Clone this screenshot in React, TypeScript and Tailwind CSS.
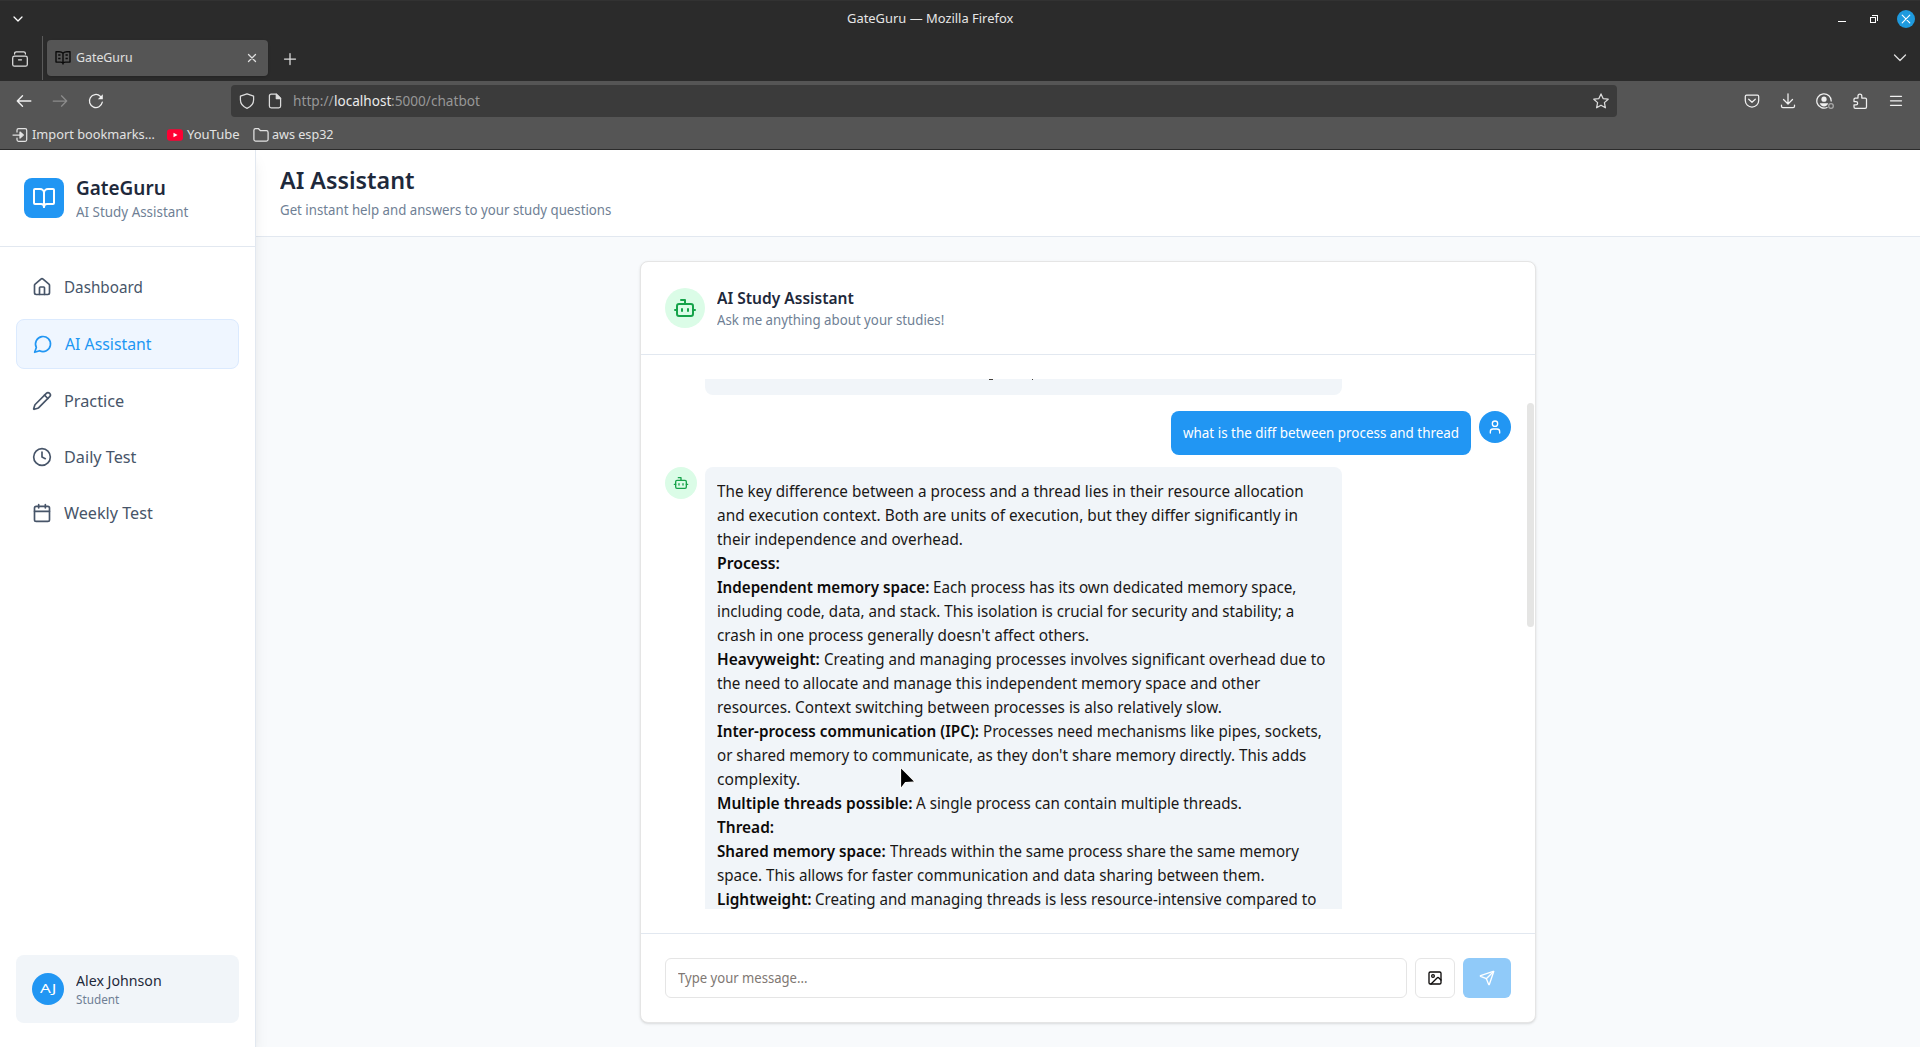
import React, { useLayoutEffect, useRef, useState } from "react";
import { BookOpen, House, Pencil, Clock, Calendar, Bot, User, Image as ImageIcon, Send } from "lucide-react";

/** Text that is scaled horizontally so that it fills exactly `w` pixels. */
function Fit({ w, children, className = "" }: { w: number; children: string; className?: string }) {
  const ref = useRef<HTMLSpanElement>(null);
  const [scale, setScale] = useState(1);
  useLayoutEffect(() => {
    if (ref.current) setScale(w / ref.current.offsetWidth);
  }, [w, children]);
  return (
    <span className={"block shrink-0 whitespace-pre " + className} style={{ width: w }}>
      <span ref={ref} className="inline-block origin-left" style={{ transform: `scaleX(${scale})` }}>
        {children}
      </span>
    </span>
  );
}

function Svg({ size = 16, sw = 1.25, className = "", children }: { size?: number; sw?: number; className?: string; children: React.ReactNode }) {
  return (
    <svg width={size} height={size} viewBox="0 0 16 16" fill="none" stroke="currentColor" strokeWidth={sw} strokeLinecap="round" strokeLinejoin="round" className={"shrink-0 " + className}>
      {children}
    </svg>
  );
}

function TitleBar() {
  return (
    <div className="flex h-9 items-center border-t border-[#323232] bg-[#2b2b2b] text-white">
      <Svg size={16} className="ml-[10px]">
        <path d="M4 6l4 4 4-4" />
      </Svg>
      <div className="ml-[821px] w-[166px] text-[13px] text-[#e6e6e6]">
        <Fit w={166}>GateGuru — Mozilla Firefox</Fit>
      </div>
      <div className="ml-auto flex items-center pr-[5px]">
        <svg width="8" height="8" className="mr-6" fill="#fff"><path d="M0 6h8v1H0z" /></svg>
        <svg width="8" height="8" className="mr-[19px]" fill="none" stroke="#fff" shapeRendering="crispEdges">
          <path d="M.5 2.5h5v5h-5zM2 .5h5.5V6" />
        </svg>
        <div className="flex size-[18px] items-center justify-center rounded-full bg-[#1e9ade]">
          <Svg size={16} sw={1.1}><path d="M4.2 4.2l7.6 7.6M11.8 4.2l-7.6 7.6" /></Svg>
        </div>
      </div>
    </div>
  );
}

function TabBar() {
  return (
    <div className="flex h-[45px] bg-[#2b2b2b] text-[#e0e0e0]">
      <div className="flex w-[42px] items-center pl-3">
        <Svg size={16}>
          <rect x=".7" y="5.2" width="14.6" height="10" rx="1.8" />
          <path d="M2.600 3v-.4Q2.600.8 4.400.8h7.200q1.800 0 1.800 1.800V3M6.500 8.800h3" />
        </Svg>
      </div>
      <div className="h-11 w-px bg-[#5a5a5a]" />
      <div className="mt-1 ml-1 flex h-9 w-[221px] items-center rounded bg-[#555] pl-2 shadow">
        <svg width="16" height="16" viewBox="0 0 16 16" fill="none" stroke="#0b0b0b" strokeWidth="1.4" strokeLinejoin="round">
          <path d="M8 3.200C7 2 6 1.700 4 1.700H1v10.400h4.500c1.300 0 2 .3 2.500 1 .5-.7 1.200-1 2.500-1H15V1.700h-3C10 1.700 9 2 8 3.200zM8 3.200V14.500M3.200 5h2.300M3.200 8.500h2.300M10.500 5h2.300M10.500 8.500h2.300" />
        </svg>
        <Fit w={57} className="ml-[5px] text-[13px]">GateGuru</Fit>
        <Svg size={16} className="mr-2 ml-auto"><path d="M4.500 4.500l7 7M11.500 4.500l-7 7" /></Svg>
      </div>
      <Svg size={16} className="mt-[15px] ml-[13.500px]"><path d="M8 2.500v11M2.500 8h11" /></Svg>
      <Svg size={16} className="mt-[14px] mr-[12px] ml-auto"><path d="M2.500 5L8 10.500 13.500 5" /></Svg>
    </div>
  );
}

function NavBar() {
  return (
    <div className="flex h-10 items-center bg-[#555] text-[#f0f0f0]">
      <Svg className="ml-4" sw={1.4}><path d="M14.800 8H1.300M6.500 2.800L1.300 8l5.200 5.200" /></Svg>
      <Svg className="ml-5 text-[#8c8c8c]"><path d="M1.200 8h13.500M9.500 2.800L14.700 8l-5.200 5.200" /></Svg>
      <Svg className="ml-5">
        <path d="M14.300 9.200A6.500 6.500 0 1 1 12.300 3.200L13.500 4.200" />
        <path d="M14.800 1.300v5H9.800z" fill="currentColor" stroke="none" />
      </Svg>
      <div className="ml-[127px] flex h-8 w-[1386px] items-center rounded bg-[#3b3b3b]">
        <Svg className="ml-2 text-[#dcdcdc]"><path d="M8 .8L1.400 3.200v3.600C1.400 10.500 4 13.700 8 15.300c4-1.600 6.600-4.800 6.600-8.500V3.200z" /></Svg>
        <Svg className="ml-3 text-[#dcdcdc]"><path d="M9.300 1.200H4.200q-1.800 0-1.800 1.800v10q0 1.800 1.800 1.800h7.600q1.800 0 1.800-1.800V5.500z" /><path d="M9.300 1.200v4.300h4.300z" fill="currentColor" /></Svg>
        <div className="mb-0.5 ml-[10px] flex text-[15px] text-[#979797]">
          <Fit w={41}>http://</Fit>
          <Fit w={57} className="text-[#ebebeb]">localhost</Fit>
          <Fit w={89}>:5000/chatbot</Fit>
        </div>
        <Svg className="mr-2 ml-auto text-[#dcdcdc]"><path d="M8 .9l2.100 4.700 5.100.6-3.800 3.400 1 5.200L8 12.200l-4.400 2.600 1-5.200L.8 6.200l5.100-.6z" /></Svg>
      </div>
      <Svg className="ml-[127px]"><path d="M2.500 2.200h11q1.200 0 1.200 1.200v4A6.700 6.700 0 0 1 1.300 7.400v-4q0-1.200 1.200-1.200zM4.700 6.200L8 9.300l3.300-3.100" /></Svg>
      <Svg className="ml-[19.500px]"><path d="M8 .8v10M3.500 6.500L8 11l4.500-4.500M1.500 12v1.300q0 1.400 1.400 1.400h10.200q1.400 0 1.400-1.400V12" /></Svg>
      <svg width="18" height="16" viewBox="0 0 18 16" fill="none" stroke="currentColor" strokeWidth="1.250" className="ml-[20.500px] shrink-0">
        <path d="M15.200 8.500A7.200 7.200 0 1 0 11.500 14.300" />
        <circle cx="8" cy="6.200" r="2.600" fill="currentColor" stroke="none" />
        <path d="M3.800 10.200h8.400c-.5 2-2.200 3.200-4.200 3.200s-3.700-1.200-4.200-3.200z" fill="currentColor" stroke="none" />
        <circle cx="15" cy="13" r="2.300" stroke="#aaa" />
      </svg>
      <Svg className="ml-[18px]"><path d="M6 5V3a1.900 1.900 0 0 1 3.800 0v2h3.400q1.300 0 1.300 1.300v7.700q0 1.300-1.300 1.300H3.300q-1.300 0-1.300-1.300v-2.200h2a1.500 1.500 0 0 0 0-3.300H2V6.300Q2 5 3.300 5z" /></Svg>
      <Svg className="ml-5"><path d="M2.500 3.300h11M2.500 7.800h11M2.500 12.300h11" /></Svg>
    </div>
  );
}

function BookmarksBar() {
  return (
    <div className="flex h-[29px] items-center border-b border-[#2b2b2b] bg-[#555] text-[13px] text-[#e2e2e2]">
      <Svg className="ml-3"><path d="M5 5V3.200Q5 1.700 6.500 1.700h6.700q1.500 0 1.500 1.500v9.600q0 1.500-1.500 1.500H6.500Q5 14.300 5 12.800V11M1 8h8" /><path d="M8 5l3.300 3L8 11z" fill="currentColor" /></Svg>
      <Fit w={123} className="ml-1">Import bookmarks…</Fit>
      <svg width="16" height="16" viewBox="0 0 16 16" className="ml-3 shrink-0"><rect y="2.300" width="16" height="11.400" rx="3" fill="#f03" /><path d="M6.500 5.700v4.600L10.500 8z" fill="#fff" /></svg>
      <Fit w={53} className="ml-1">YouTube</Fit>
      <Svg className="ml-[13px]"><path d="M.9 12.500V3.200q0-1.700 1.700-1.700h2.700L7.500 3.700h5.900q1.700 0 1.700 1.700v7.100q0 1.500-1.700 1.500H2.600Q.9 14 .9 12.500z" /></Svg>
      <Fit w={62} className="ml-[3px]">aws esp32</Fit>
    </div>
  );
}

const MessageCircle = () => (
  <svg width="20" height="20" viewBox="0 0 24 24" fill="none" stroke="currentColor" strokeWidth="2" strokeLinecap="round" strokeLinejoin="round" className="shrink-0">
    <path d="M7.900 20A9 9 0 1 0 4 16.100L2 22Z" />
  </svg>
);

const links = [
  { label: "Dashboard", w: 79, icon: <House size={20} /> },
  { label: "AI Assistant", w: 87, icon: <MessageCircle />, active: true },
  { label: "Practice", w: 60, icon: <Pencil size={20} /> },
  { label: "Daily Test", w: 72, icon: <Clock size={20} /> },
  { label: "Weekly Test", w: 89, icon: <Calendar size={20} /> },
];

function Sidebar() {
  return (
    <aside className="relative z-10 flex w-64 shrink-0 flex-col border-r border-slate-200 bg-white shadow-lg">
      <div className="flex items-center gap-3 border-b border-slate-200 p-6">
        <div className="flex size-10 items-center justify-center rounded-lg bg-[#2196f3] text-white"><BookOpen size={24} /></div>
        <div>
          <Fit w={90} className="text-xl leading-7 font-semibold text-[#1e293b]">GateGuru</Fit>
          <Fit w={112} className="text-sm text-[#6f7f95]">AI Study Assistant</Fit>
        </div>
      </div>
      <nav className="flex flex-1 flex-col gap-2 p-4">
        {links.map((l) => (
          <a key={l.label} className={l.active ? "flex items-center gap-3 rounded-lg border border-blue-100 bg-[#eff6ff] px-4 py-3 text-[#2196f3]" : "flex items-center gap-3 rounded-lg px-4 py-3 text-[#475569]"}>
            {l.icon}
            <Fit w={l.w}>{l.label}</Fit>
          </a>
        ))}
      </nav>
      <div className="mx-4 mb-6 flex items-center gap-3 rounded-lg bg-slate-100 p-4">
        <div className="flex size-8 items-center justify-center rounded-full bg-[#2196f3] text-[13px] text-white"><Fit w={17}>AJ</Fit></div>
        <div>
          <Fit w={86} className="text-sm text-[#1e293b]">Alex Johnson</Fit>
          <Fit w={43} className="relative top-px text-xs text-[#6f7f95]">Student</Fit>
        </div>
      </div>
    </aside>
  );
}

type Line = { bold?: string; bw?: number; text?: string; w?: number };
const lines: Line[] = [
  { text: "The key difference between a process and a thread lies in their resource allocation", w: 587 },
  { text: "and execution context. Both are units of execution, but they differ significantly in", w: 581 },
  { text: "their independence and overhead.", w: 246 },
  { bold: "Process:", bw: 63 },
  { bold: "Independent memory space: ", bw: 216, text: "Each process has its own dedicated memory space,", w: 363 },
  { text: "including code, data, and stack. This isolation is crucial for security and stability; a", w: 577 },
  { text: "crash in one process generally doesn't affect others.", w: 372 },
  { bold: "Heavyweight: ", bw: 107, text: "Creating and managing processes involves significant overhead due to", w: 501 },
  { text: "the need to allocate and manage this independent memory space and other", w: 543 },
  { text: "resources. Context switching between processes is also relatively slow.", w: 505 },
  { bold: "Inter-process communication (IPC): ", bw: 266, text: "Processes need mechanisms like pipes, sockets,", w: 339 },
  { text: "or shared memory to communicate, as they don't share memory directly. This adds", w: 589 },
  { text: "complexity.", w: 83 },
  { bold: "Multiple threads possible: ", bw: 199, text: "A single process can contain multiple threads.", w: 326 },
  { bold: "Thread:", bw: 57 },
  { bold: "Shared memory space: ", bw: 173, text: "Threads within the same process share the same memory", w: 409 },
  { text: "space. This allows for faster communication and data sharing between them.", w: 548 },
  { bold: "Lightweight: ", bw: 98, text: "Creating and managing threads is less resource-intensive compared to", w: 501 },
];

function Messages() {
  return (
    <div className="relative h-[579px] border-b border-slate-200 p-6">
      <div className="h-[530px] overflow-hidden">
        <div className="relative ml-10 h-4 w-[637px] rounded-b-lg bg-slate-100">
          <div className="absolute top-0 left-[284px] h-px w-1 bg-stone-700" />
          <div className="absolute top-0 left-[327px] h-px w-px bg-stone-700" />
        </div>
        <div className="mt-4 flex justify-end gap-2">
          <div className="rounded-lg bg-[#2196f3] p-3 text-sm text-white"><Fit w={276}>what is the diff between process and thread</Fit></div>
          <div className="flex size-8 items-center justify-center rounded-full bg-[#2196f3] text-white"><User size={16} /></div>
        </div>
        <div className="mt-3 flex items-start gap-2">
          <div className="flex size-8 items-center justify-center rounded-full bg-green-100 text-[#16a34a]"><Bot size={16} /></div>
          <div className="h-[460px] w-[637px] rounded-lg bg-slate-100 p-3 text-base text-[#1a1817]">
            {lines.map((l, i) => (
              <div key={i} className="flex h-6">
                {l.bold && <Fit w={l.bw!} className="font-semibold text-[#0c0a09]">{l.bold}</Fit>}
                {l.text && <Fit w={l.w!}>{l.text}</Fit>}
              </div>
            ))}
          </div>
        </div>
      </div>
      <div className="absolute top-12 right-[1px] h-56 w-[7px] rounded-full bg-[#e5e5e4]" />
    </div>
  );
}

function ChatCard() {
  return (
    <section className="mx-auto mt-6 flex h-[762px] w-[896px] flex-col rounded-lg border border-[#e5e5e5] bg-white shadow-sm">
      <div className="flex items-center gap-3 border-b border-slate-200 p-6">
        <div className="flex size-10 items-center justify-center rounded-full bg-green-100 text-[#16a34a]"><Bot size={24} /></div>
        <div>
          <Fit w={137} className="font-semibold text-[#1e293b]">AI Study Assistant</Fit>
          <Fit w={227} className="text-sm text-[#6f7f95]">Ask me anything about your studies!</Fit>
        </div>
      </div>
      <Messages />
      <div className="flex gap-2 p-6">
        <div className="flex h-10 flex-1 items-center rounded-md border border-[#e5e5e5] px-3 text-sm text-[#807873]"><Fit w={130}>Type your message...</Fit></div>
        <button className="flex size-10 items-center justify-center rounded-md border border-[#e5e5e5] text-[#0c0a09]"><ImageIcon size={16} /></button>
        <button className="flex h-10 w-12 items-center justify-center rounded-md bg-[#90caf9] text-white"><Send size={16} /></button>
      </div>
    </section>
  );
}

export default function App() {
  return (
    <div className="relative flex h-[1047px] w-[1920px] flex-col overflow-hidden bg-slate-50 font-['Noto_Sans',sans-serif]">
      <TitleBar />
      <TabBar />
      <NavBar />
      <BookmarksBar />
      <div className="flex h-[897px] overflow-hidden">
        <Sidebar />
        <main className="flex-1">
          <header className="h-[87px] border-b border-slate-200 bg-white px-6 pt-[14px]">
            <Fit w={135} className="text-2xl font-semibold text-[#1e293b]">AI Assistant</Fit>
            <Fit w={331} className="mt-1 text-sm text-[#6f7f95]">Get instant help and answers to your study questions</Fit>
          </header>
          <ChatCard />
        </main>
      </div>
      <svg width="20" height="24" viewBox="0 0 20 24" className="absolute top-[766px] left-[898px]">
        <path d="M2.500 2.500v19c0 .6.600.8 1 .400l4-5.400 8.500-.3c.7 0 .9-.7.400-1.100L3.500 2c-.5-.4-1 0-1 .5z" fill="#000" stroke="#fff" strokeWidth="1.200" strokeLinejoin="round" />
      </svg>
    </div>
  );
}
